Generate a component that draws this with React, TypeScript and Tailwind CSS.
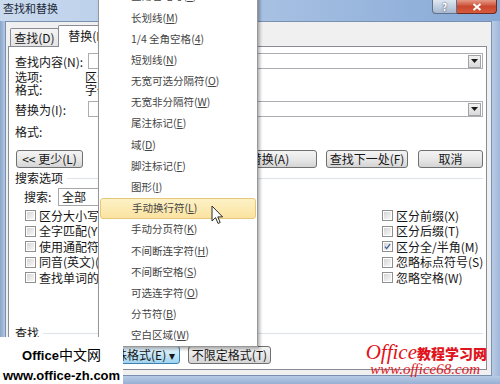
import React from 'react'

const menuItems: [string, string][] = [
  ['全角省略号', 'F'],
  ['长划线', 'M'],
  ['1/4 全角空格', '4'],
  ['短划线', 'N'],
  ['无宽可选分隔符', 'O'],
  ['无宽非分隔符', 'W'],
  ['尾注标记', 'E'],
  ['域', 'D'],
  ['脚注标记', 'F'],
  ['图形', 'I'],
  ['手动换行符', 'L'],
  ['手动分页符', 'K'],
  ['不间断连字符', 'H'],
  ['不间断空格', 'S'],
  ['可选连字符', 'O'],
  ['分节符', 'B'],
  ['空白区域', 'W'],
]

const leftChecks = ['区分大小写(H)', '全字匹配(Y)', '使用通配符(U)', '同音(英文)(K)', '查找单词的所有形式(英文)(W)']
const rightChecks = ['区分前缀(X)', '区分后缀(T)', '区分全/半角(M)', '忽略标点符号(S)', '忽略空格(W)']

function Btn({ children, className = '', active = false }: { children: React.ReactNode; className?: string; active?: boolean }) {
  return (
    <div
      className={`h-full shrink-0 flex items-center justify-center rounded-[3px] border text-[12px] leading-none whitespace-nowrap ${
        active
          ? 'border-[#3c7fb1] bg-linear-to-b from-[#eaf6fd] via-[#c4e5f6] to-[#9fd3ef]'
          : 'border-[#707070] bg-linear-to-b from-[#f4f4f4] via-[#e8e8e8] to-[#d4d4d4]'
      } ${className}`}
    >
      {children}
    </div>
  )
}

function Check({ checked = false }: { checked?: boolean }) {
  return (
    <div className="w-[11px] h-[11px] shrink-0 border border-[#8e8f8f] bg-white p-px">
      <div className="w-full h-full bg-linear-to-br from-[#d6d6d6] to-[#f8f8f8] flex items-center justify-center">
        {checked && (
          <svg width="9" height="9" viewBox="0 0 9 9">
            <path d="M1.2 4.6 L3.4 7.2 L7.8 1.4" fill="none" stroke="#3d5a98" strokeWidth="1.6" />
          </svg>
        )}
      </div>
    </div>
  )
}

function Combo() {
  return (
    <div className="flex-1 h-full border border-[#abadb3] bg-white flex justify-end items-center pr-px">
      <div className="w-[13px] h-[13px] border border-[#a3a3a3] bg-linear-to-b from-[#f2f2f2] to-[#d9d9d9] flex items-center justify-center">
        <svg width="7" height="4" viewBox="0 0 7 4">
          <path d="M0 0 H7 L3.5 4 Z" fill="#1a1a1a" />
        </svg>
      </div>
    </div>
  )
}

export default function App() {
  return (
    <div className="relative w-[500px] h-[384px] overflow-hidden flex flex-col bg-[#a8bedc] font-['Noto_Sans_CJK_SC',sans-serif] text-[#161616]">
      {/* 标题栏 */}
      <div className="h-[21px] shrink-0 flex justify-between bg-linear-to-r from-[#cbdbef] via-[#a9c2e3] to-[#86a8d6]">
        <div className="pl-[3px] pt-px text-[11px] leading-[14px] text-[#1c2838]">查找和替换</div>
        <div className="flex items-start pr-[3px]">
          <div className="w-[25px] h-[14px] rounded-bl-[4px] border border-t-0 border-[#5f718b] bg-linear-to-b from-[#dfe7f1] to-[#a7b8cf] flex items-center justify-center text-[10px] leading-none font-bold text-white [text-shadow:0_0_2px_#334]">
            ?
          </div>
          <div className="w-[40px] h-[14px] rounded-br-[4px] border border-t-0 border-l-0 border-[#6b2b23] bg-linear-to-b from-[#e59a88] via-[#c9472f] to-[#d65a3c] flex items-center justify-center">
            <svg width="10" height="8" viewBox="0 0 10 8">
              <path d="M1.5 1 L8.5 7 M8.5 1 L1.5 7" stroke="white" strokeWidth="2" />
            </svg>
          </div>
        </div>
      </div>

      <div className="flex-1 flex min-h-0">
        <div className="w-[5px] shrink-0 bg-linear-to-r from-[#8aa4c8] to-[#b3c8e4]" />
        {/* 对话框主体 */}
        <div className="flex-1 flex flex-col min-w-0 bg-[#f0f0f0] border border-[#7990b0] pt-[3px] pl-[2px] pr-[4px] pb-[5px]">
          {/* 选项卡 */}
          <div className="h-[21px] shrink-0 flex items-end relative z-10 text-[12px] leading-none">
            <div className="ml-[2px] h-[18px] w-[49px] border border-b-0 border-[#898c95] rounded-t-[2px] bg-linear-to-b from-[#f5f5f5] to-[#e4e4e4] flex items-center justify-center pt-px">
              查找(D)
            </div>
            <div className="-ml-px -mb-px h-[22px] w-[60px] border border-b-0 border-[#898c95] rounded-t-[2px] bg-white flex items-center justify-center pb-px">
              替换(P)
            </div>
            <div className="-ml-px h-[18px] w-[58px] border border-b-0 border-[#898c95] rounded-t-[2px] bg-[#ececec] flex items-center justify-center">
              定位(G)
            </div>
          </div>

          {/* 面板 */}
          <div className="flex-1 flex flex-col border border-[#898c95] bg-white pl-[6px] pr-[3px] text-[12px] leading-none">
            <div className="mt-[6px] h-[16px] flex items-center">
              <div className="w-[73px] pt-px">查找内容(N):</div>
              <Combo />
            </div>
            <div className="mt-px h-[13px] flex items-center">
              <div className="w-[70px]">选项:</div>
              <div>区分全/半角</div>
            </div>
            <div className="h-[14px] flex items-center">
              <div className="w-[70px]">格式:</div>
              <div>字体颜色: 红色</div>
            </div>
            <div className="mt-[4px] h-[16px] flex items-center">
              <div className="w-[73px] pt-px">替换为(I):</div>
              <Combo />
            </div>
            <div className="mt-[8px] h-[14px] flex items-center">
              <div>格式:</div>
            </div>

            <div className="mt-[11px] h-[18px] flex">
              <Btn className="ml-px w-[67px]">&lt;&lt; 更少(L)</Btn>
              <Btn className="ml-[27px] w-[80px]">替换(R)</Btn>
              <Btn className="ml-[8px] w-[119px]">全部替换(A)</Btn>
              <Btn className="ml-[9px] w-[82px]">查找下一处(F)</Btn>
              <Btn className="ml-[10px] w-[65px]">取消</Btn>
            </div>

            <div className="mt-[3px] h-[14px] flex items-center">
              <div>搜索选项</div>
              <div className="flex-1 ml-[4px] h-px bg-[#dde3e8]" />
            </div>

            <div className="mt-[3px] h-[18px] flex items-center">
              <div className="ml-[9px] w-[34px]">搜索:</div>
              <div className="w-[100px] h-full border border-[#a6a6a6] bg-white flex items-center pl-[3px]">全部</div>
            </div>

            <div className="mt-[2px] grid grid-cols-[357px_1fr] ml-[10px]">
              {leftChecks.map((t, i) => (
                <React.Fragment key={t}>
                  <div className="h-[15.5px] flex items-center gap-[3px] whitespace-nowrap">
                    <Check />
                    <span>{t}</span>
                  </div>
                  <div className="h-[15.5px] flex items-center gap-[3px] whitespace-nowrap">
                    <Check checked={i === 2} />
                    <span>{rightChecks[i]}</span>
                  </div>
                </React.Fragment>
              ))}
            </div>

            <div className="mt-[40.5px] h-[14px] flex items-center">
              <div>查找</div>
              <div className="flex-1 ml-[4px] h-px bg-[#dde3e8]" />
            </div>

            <div className="mt-[6px] h-[18px] flex">
              <Btn className="ml-px w-[75px]">格式(O) ▾</Btn>
              <Btn active className="ml-[7px] w-[82px]">特殊格式(E) ▾</Btn>
              <Btn className="ml-[8px] w-[83px]">不限定格式(T)</Btn>
            </div>
          </div>
        </div>
        <div className="w-[8px] shrink-0 bg-linear-to-r from-[#b9cce6] to-[#9fb7d8]" />
      </div>
      <div className="h-[8px] shrink-0 bg-linear-to-b from-[#b7cbe5] to-[#97b0d3]" />

      {/* 特殊格式 菜单 */}
      <div className="absolute left-[98px] top-[-17px] w-[160px] border border-[#979797] bg-white pt-[2px] shadow-[2px_2px_3px_rgba(0,0,0,0.3)] z-20">
        {menuItems.map(([t, k], i) => (
          <div
            key={i}
            className={`h-[21.2px] ml-px mr-px flex items-center pl-[31px] text-[10.5px] leading-none text-[#444] whitespace-nowrap ${
              i === 10 ? 'rounded-[3px] border border-[#e5c87a] bg-linear-to-b from-[#fdf1c6] to-[#fbe3a0] pl-[30px]' : ''
            }`}
          >
            {t}(<span className="underline underline-offset-1">{k}</span>)
          </div>
        ))}
      </div>

      {/* 鼠标指针 */}
      <svg className="absolute left-[211px] top-[205px] z-30" width="13" height="20" viewBox="0 0 13 20">
        <path d="M1 1 L1 16 L4.6 12.6 L7 18.4 L9.2 17.5 L6.8 11.9 L11.6 11.9 Z" fill="white" stroke="#2a2a2a" strokeWidth="1" strokeLinejoin="round" />
      </svg>

      {/* 左下水印 */}
      <div className="absolute left-0 top-[337px] w-[123px] h-[47px] bg-white z-30 flex flex-col items-center text-black">
        <div className="mt-[9px] h-[16px] flex items-baseline">
          <span className="font-['Liberation_Sans',sans-serif] font-bold text-[13px]">Office</span>
          <span className="text-[14px] leading-none">中文网</span>
        </div>
        <div className="mt-[7px] font-['Liberation_Sans',sans-serif] font-bold text-[13px] leading-none">www.office-zh.com</div>
      </div>

      {/* 右下水印 */}
      <div className="absolute right-[13px] top-[342px] z-30 flex flex-col items-end text-[#e0141c]">
        <div className="flex items-baseline leading-none">
          <span className="font-['Liberation_Serif',serif] italic text-[21px]">Office</span>
          <span className="font-black text-[14px]">教程学习网</span>
        </div>
        <div className="mr-[7px] font-['Liberation_Serif',serif] italic text-[15px] leading-none -mt-px">www.office68.com</div>
      </div>
    </div>
  )
}
